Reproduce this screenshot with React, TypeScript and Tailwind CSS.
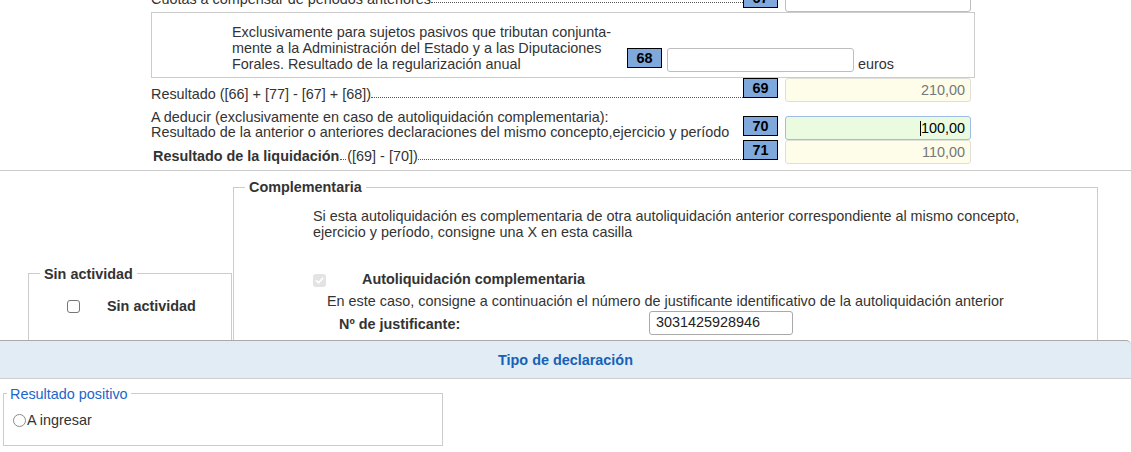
import React from "react"

function NumBox({ n }: { n: string }) {
  return (
    <div className="w-[35px] h-[20px] shrink-0 bg-[#7fa8dc] border border-black flex items-center justify-center font-bold text-black leading-none">
      {n}
    </div>
  )
}

function Amount({ value, tone }: { value?: string; tone: "plain" | "calc" | "edit" }) {
  const toneClass =
    tone === "calc"
      ? "bg-[#fdfde9] border-[#e0e0d8] text-[#777]"
      : tone === "edit"
        ? "bg-[#eafbe0] border-[#9dbde6] text-black"
        : "bg-white border-[#bdbdbd]"
  return (
    <div className={`w-[186px] h-[24px] shrink-0 rounded-[3px] border flex items-center justify-end pr-[5px] leading-none ${toneClass}`}>
      {tone === "edit" && <span className="w-[1px] h-[15px] bg-black" />}
      {value}
    </div>
  )
}

function Leader({ className = "" }: { className?: string }) {
  return <span className={`border-b border-dotted border-[#555] mb-[4px] ${className}`} />
}

export default function App() {
  return (
    <div className="w-[1131px] h-[452px] overflow-hidden bg-white text-[#333] text-[14.4px] font-['Liberation_Sans',Arial,sans-serif]">
      <div className="pl-[151px] w-[975px] -mt-[12px]">
        {/* 67 */}
        <div className="w-[820px] flex items-end">
          <div className="flex-1 flex items-end pb-[5px] min-w-0">
            <span className="leading-[15px] whitespace-nowrap">Cuotas a compensar de periodos anteriores</span>
            <Leader className="flex-1" />
          </div>
          <div className="flex items-start gap-[7px]">
            <NumBox n="67" />
            <Amount tone="plain" />
          </div>
        </div>

        {/* 68 */}
        <div className="h-[66px] border border-[#cccccc] flex items-end pl-[80px] pb-[5px]">
          <div className="w-[395px] leading-[16px] whitespace-nowrap">
            Exclusivamente para sujetos pasivos que tributan conjunta-
            <br />
            mente a la Administración del Estado y a las Diputaciones
            <br />
            Forales. Resultado de la regularización anual
          </div>
          <div className="flex items-start gap-[5px]">
            <NumBox n="68" />
            <div className="w-[187px] h-[24px] rounded-[3px] border border-[#bdbdbd] bg-white" />
          </div>
          <span className="ml-[4px] leading-[16px]">euros</span>
        </div>

        {/* 69 */}
        <div className="w-[820px] flex items-end">
          <div className="flex-1 flex items-end min-w-0">
            <span className="leading-[15px] whitespace-nowrap">Resultado ([66] + [77] - [67] + [68])</span>
            <Leader className="flex-1" />
          </div>
          <div className="flex items-start gap-[7px]">
            <NumBox n="69" />
            <Amount tone="calc" value="210,00" />
          </div>
        </div>

        {/* 70 */}
        <div className="w-[820px] flex items-end mt-[8px]">
          <div className="flex-1 leading-[15px] whitespace-nowrap">
            A deducir (exclusivamente en caso de autoliquidación complementaria):
            <br />
            Resultado de la anterior o anteriores declaraciones del mismo concepto,ejercicio y período
          </div>
          <div className="flex items-start gap-[7px]">
            <NumBox n="70" />
            <Amount tone="edit" value="100,00" />
          </div>
        </div>

        {/* 71 */}
        <div className="w-[820px] flex items-end">
          <div className="flex-1 flex items-end min-w-0 pl-[2px]">
            <span className="leading-[15px] whitespace-nowrap font-bold">Resultado de la liquidación</span>
            <Leader className="w-[6px] mx-[1px]" />
            <span className="leading-[15px] whitespace-nowrap">([69] - [70])</span>
            <Leader className="flex-1" />
          </div>
          <div className="flex items-start gap-[7px]">
            <NumBox n="71" />
            <Amount tone="calc" value="110,00" />
          </div>
        </div>
      </div>

      <div className="mt-[6px] border-t border-[#cccccc] flex items-end">
        <fieldset className="ml-[28px] w-[204px] border border-b-0 border-[#cccccc] pb-[25px]">
          <legend className="ml-[11px] px-[4px] font-bold leading-[16px]">Sin actividad</legend>
          <div className="mt-[17px] h-[16px] flex items-center">
            <span className="ml-[38px] w-[13px] h-[13px] rounded-[3px] border border-[#767676] bg-white" />
            <span className="ml-[27px] font-bold">Sin actividad</span>
          </div>
        </fieldset>

        <fieldset className="ml-[1px] mt-[8px] w-[865px] border border-b-0 border-[#cccccc] pb-[4px]">
          <legend className="ml-[11px] px-[4px] font-bold leading-[16px]">Complementaria</legend>
          <div className="mt-[13px] pl-[79px] leading-[16px]">
            Si esta autoliquidación es complementaria de otra autoliquidación anterior correspondiente al mismo concepto,
            <br />
            ejercicio y período, consigne una X en esta casilla
          </div>
          <div className="mt-[32px] h-[16px] pl-[79px] flex items-center">
            <span className="w-[13px] h-[13px] rounded-[3px] bg-[#e3e3e3] flex items-center justify-center">
              <svg width="9" height="9" viewBox="0 0 10 10" fill="none">
                <path d="M1.5 5.2 L4 7.6 L8.6 2.4" stroke="#ffffff" strokeWidth="1.8" strokeLinecap="round" strokeLinejoin="round" />
              </svg>
            </span>
            <span className="ml-[36px] font-bold">Autoliquidación complementaria</span>
          </div>
          <div className="mt-[5px] pl-[93px] leading-[16px]">
            En este caso, consigne a continuación el número de justificante identificativo de la autoliquidación anterior
          </div>
          <div className="mt-[1px] flex items-center">
            <span className="ml-[105px] w-[310px] font-bold pt-[4px]">Nº de justificante:</span>
            <div className="w-[144px] h-[24px] rounded-[3px] border border-[#a9a9a9] flex items-center pl-[6px] text-[#222]">
              3031425928946
            </div>
          </div>
        </fieldset>
      </div>

      <div className="h-[39px] pt-[3px] bg-[#e1ecf5] border-t border-b border-t-[#a9a9a9] border-b-[#cfcfcf] rounded-tr-[5px] flex items-center justify-center font-bold text-[#1761b8]">
        Tipo de declaración
      </div>

      <fieldset className="ml-[3px] mt-[7px] w-[440px] border border-[#cccccc] pb-[16px]">
        <legend className="ml-[3px] px-[3px] text-[#1a66cc] leading-[16px]">Resultado positivo</legend>
        <div className="mt-[11px] h-[16px] pl-[9px] flex items-center">
          <span className="w-[13px] h-[13px] rounded-full border border-[#8a8a8a] bg-white" />
          <span className="ml-[1px]">A ingresar</span>
        </div>
      </fieldset>
    </div>
  )
}
